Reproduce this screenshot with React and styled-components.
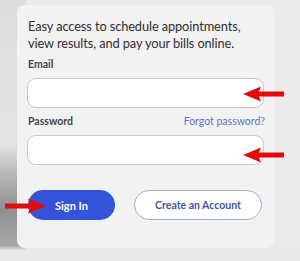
import styled, { createGlobalStyle } from 'styled-components';

const Global = createGlobalStyle`
  html, body { margin: 0; padding: 0; }
  body { font-family: Lato, "Open Sans", sans-serif; }
`;

export default function App() {
  return (
    <>
      <Global />
      <Page>
        <Card>
          <Intro>Easy access to schedule appointments, view results, and pay your bills online.</Intro>
          <LabelRow>
            <Label>Email</Label>
          </LabelRow>
          <Field />
          <LabelRow>
            <Label>Password</Label>
            <Link>Forgot password?</Link>
          </LabelRow>
          <Field type="password" />
          <Buttons>
            <Primary>Sign In</Primary>
            <Secondary>Create an Account</Secondary>
          </Buttons>
        </Card>
        <Arrow $x={243} $y={86} $dir="left" />
        <Arrow $x={243} $y={147} $dir="left" />
        <Arrow $x={4} $y={198} $dir="right" />
      </Page>
    </>
  );
}

function Arrow({ $x, $y, $dir }) {
  return (
    <ArrowBox $x={$x} $y={$y}>
      <svg width="42" height="16" viewBox="0 0 42 16" style={{ transform: $dir === 'right' ? 'scaleX(-1)' : 'none' }}>
        <path d="M0 8 L18 0.5 L16 5.5 L41 5.5 L41 10.5 L16 10.5 L18 15.5 Z" fill="#e4090c" />
      </svg>
    </ArrowBox>
  );
}

const Page = styled.div`
  position: relative;
  width: 300px;
  height: 261px;
  overflow: hidden;
  background:
    linear-gradient(180deg, rgba(255,255,255,0) 94%, #e9e9e9 96%),
    linear-gradient(90deg, rgba(0,0,0,0) 0%, rgba(0,0,0,0) 8%, #ebebeb 9%),
    linear-gradient(180deg, #dcdcdc 0%, #e4e4e4 55%, #b9b9b9 66%, #8f8f8f 80%, #a5a5a5 92%);
  padding: 5px 0 0 17px;
  box-sizing: border-box;
`;

const Card = styled.div`
  width: 257px;
  height: 243px;
  box-sizing: border-box;
  background: #f2f2f3;
  border-radius: 8px;
  padding: 13px 10px 0 10px;
  display: flex;
  flex-direction: column;
`;

const Intro = styled.p`
  margin: 0 0 -1px 1px;
  max-width: 226px;
  font-size: 12.8px;
  line-height: 17px;
  letter-spacing: -0.1px;
  color: #303030;
`;

const Label = styled.div`
  font-size: 10.5px;
  line-height: 13px;
  font-weight: 700;
  color: #444;
  margin-left: 1px;
`;

const LabelRow = styled.div`
  display: flex;
  justify-content: space-between;
  align-items: baseline;
  margin-top: 7px;
  margin-right: -1px;
`;

const Link = styled.span`
  font-size: 10.5px;
  line-height: 13px;
  color: #6174c2;
`;

const Field = styled.input`
  display: block;
  width: 237px;
  height: 30px;
  box-sizing: border-box;
  margin: 7px 0 0 0;
  background: #fff;
  border: 1px solid #c8c8c8;
  border-radius: 9px;
`;

const Buttons = styled.div`
  display: flex;
  gap: 19px;
  margin-top: 25px;
  padding-left: 1px;
`;

const Primary = styled.button`
  width: 87px;
  height: 30px;
  border: none;
  border-radius: 15px;
  background: #3453db;
  color: #fff;
  font-family: inherit;
  font-weight: 700;
  font-size: 11px;
`;

const Secondary = styled.button`
  width: 128px;
  height: 30px;
  border: 1px solid #a3aed0;
  border-radius: 15px;
  background: #fff;
  color: #4258aa;
  font-family: inherit;
  font-weight: 700;
  font-size: 10.5px;
`;

const ArrowBox = styled.div`
  position: absolute;
  left: ${p => p.$x}px;
  top: ${p => p.$y}px;
  line-height: 0;
`;
